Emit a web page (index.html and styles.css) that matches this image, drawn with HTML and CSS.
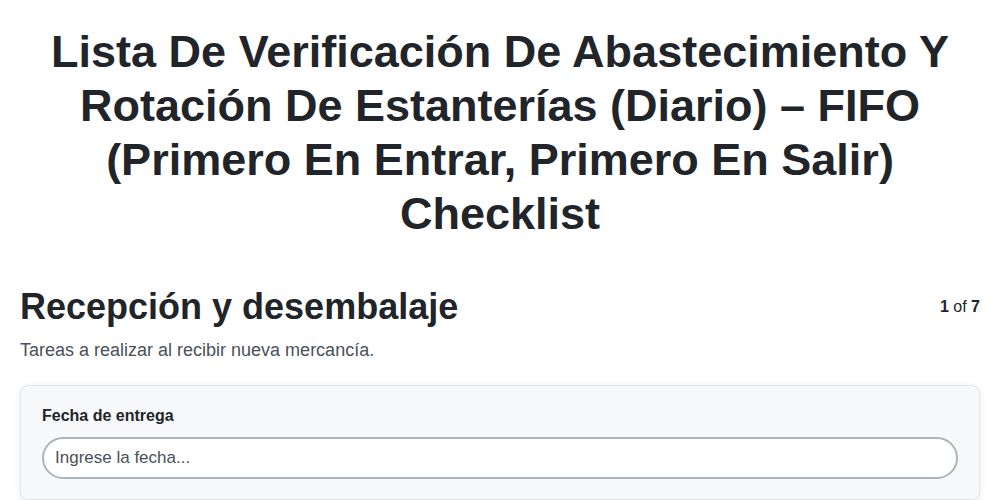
FILE: index.html
```html
<!DOCTYPE html>
<html lang="es">
<head>
<meta charset="utf-8">
<title>Checklist</title>
<link rel="stylesheet" href="styles.css">
</head>
<body>
<div class="page">
  <h1 class="title">Lista De Verificación De Abastecimiento Y Rotación De Estanterías (Diario) – FIFO (Primero En Entrar, Primero En Salir) Checklist</h1>
  <div class="section-head">
    <h2 class="section-title">Recepción y desembalaje</h2>
    <div class="pager"><b>1</b> of <b>7</b></div>
  </div>
  <p class="section-desc">Tareas a realizar al recibir nueva mercancía.</p>
  <div class="card">
    <label class="field-label" for="fecha">Fecha de entrega</label>
    <input class="field-input" id="fecha" type="text" placeholder="Ingrese la fecha...">
  </div>
</div>
</body>
</html>
```

FILE: styles.css
```css
* { box-sizing: border-box; }
html, body { margin: 0; padding: 0; background: #fff; }
body {
  font-family: "Liberation Sans", Arial, sans-serif;
  color: #212529;
}
.page {
  padding: 25px 20px 0 20px;
}
.title {
  margin: 0 0 44px 0;
  text-align: center;
  font-size: 45px;
  line-height: 54px;
  font-weight: 700;
  color: #212529;
  padding: 0 10px;
}
.section-head {
  display: flex;
  justify-content: space-between;
  align-items: center;
}
.section-title {
  margin: 0;
  font-size: 36px;
  line-height: 44px;
  font-weight: 700;
}
.pager {
  font-size: 16px;
  color: #212529;
}
.section-desc {
  margin: 11px 0 24px 0;
  font-size: 18px;
  line-height: 21px;
  color: #4a5059;
}
.card {
  background: #f7f8fa;
  border: 1px solid #e4e6ea;
  border-radius: 8px;
  box-shadow: 0 2px 8px rgba(0,0,0,0.08);
  padding: 21px 21px 20px 21px;
  display: flex;
  flex-direction: column;
}
.field-label {
  font-size: 16px;
  line-height: 18px;
  font-weight: 700;
  margin-bottom: 12px;
}
.field-input {
  font-family: "Liberation Sans", Arial, sans-serif;
  font-size: 17px;
  height: 42px;
  border: 2px solid #adb3ba;
  border-radius: 21px;
  padding: 0 11px;
  background: #fff;
  color: #212529;
}
.field-input::placeholder { color: #4a5059; }
```
